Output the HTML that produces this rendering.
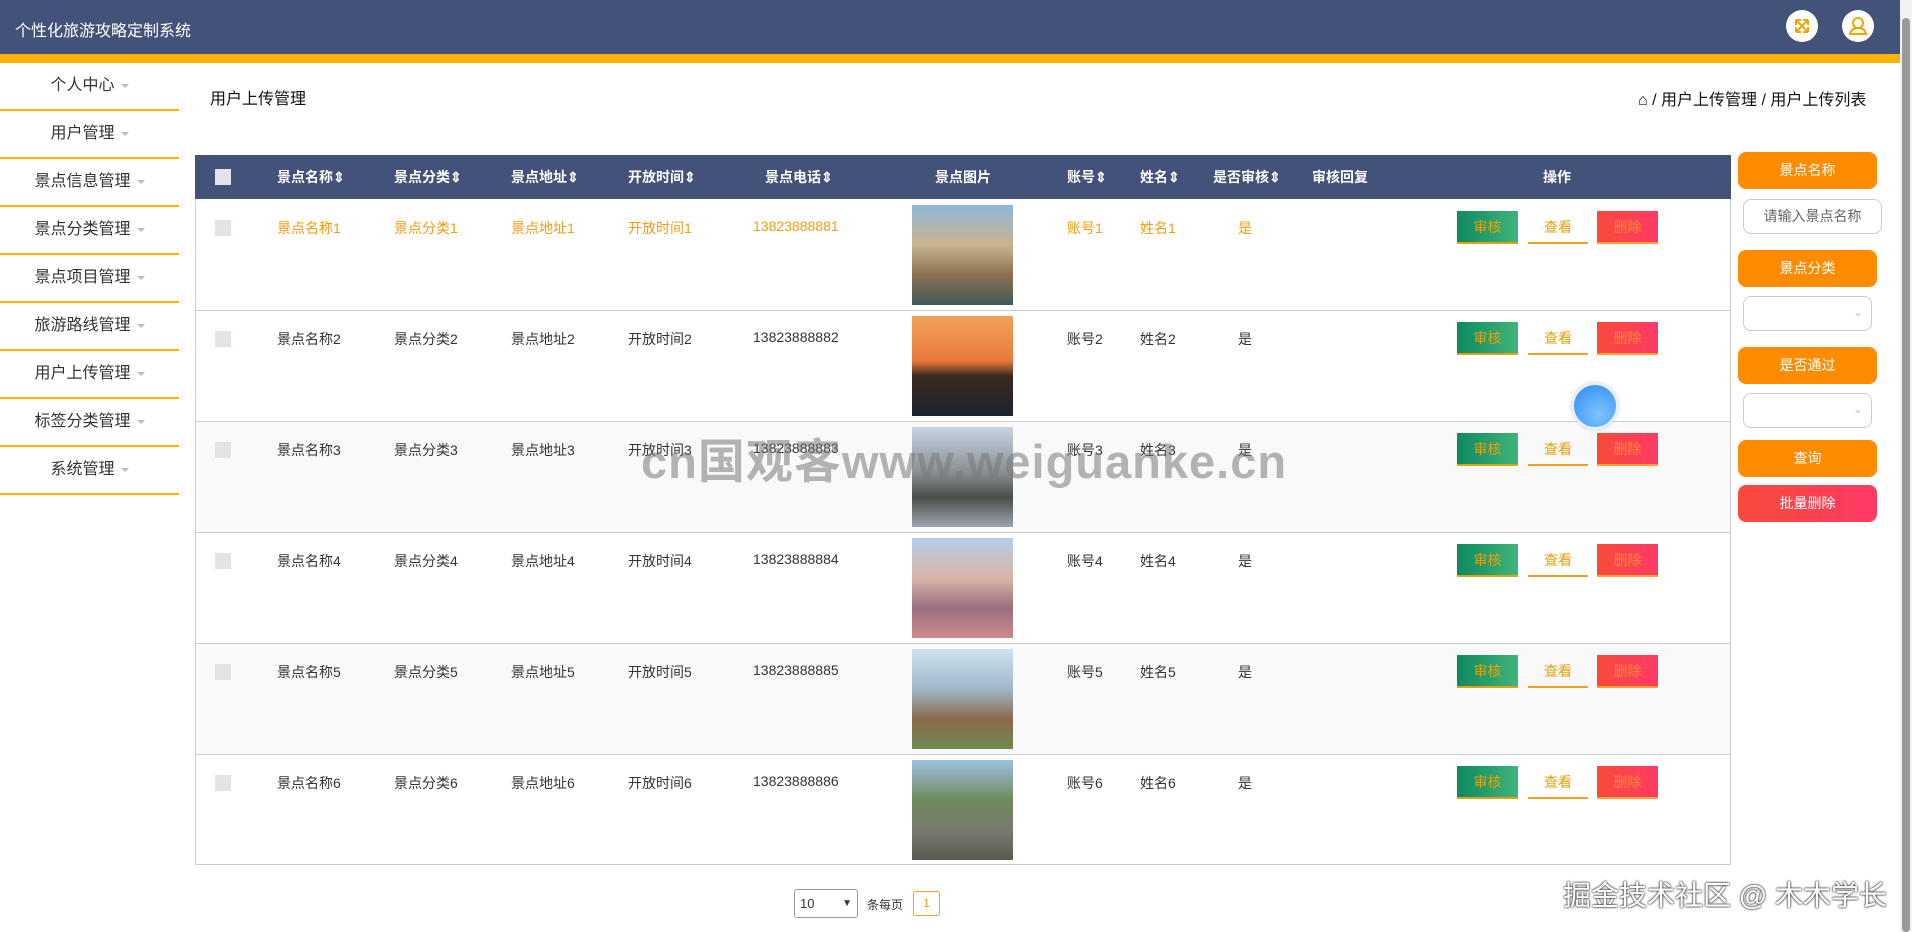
<!DOCTYPE html>
<html><head><meta charset="utf-8">
<style>
*{margin:0;padding:0;box-sizing:border-box}
body{width:1912px;height:932px;overflow:hidden;background:#fff;font-family:"Liberation Sans","Noto Sans CJK SC",sans-serif;position:relative;color:#333}
.a{position:absolute}
.hdr{left:0;top:0;width:1900px;height:54px;background:#435278}
.bar{left:0;top:54px;width:1900px;height:9px;background:#ffb300}
.ttl{left:15px;top:17px;color:#fff;font-size:16px}
.ic{width:32px;height:32px;border-radius:50%;background:#fff;top:10px}
.side{left:0;width:179px;height:48px;border-bottom:2px solid #ffb300;text-align:center;font-size:16px;line-height:46px;color:#333}
.side i{display:inline-block;width:0;height:0;border-left:4px solid transparent;border-right:4px solid transparent;border-top:4px solid #bbb;margin-left:6px;vertical-align:middle}
.th{top:155px;height:44px;left:195px;width:1536px;background:#435278}
.hc{top:155px;line-height:44px;color:#fff;font-size:14px;font-weight:bold}
.tbl{left:195px;top:155px;width:1536px;height:710px;border:1px solid #ccc}
.row{left:196px;width:1534px;height:111px;border-top:1px solid #ccc}
.cell{font-size:14px}
.cb{width:16px;height:16px;background:#e0e3e7}
.btn{height:33px;width:61px;font-size:14px;line-height:33px;text-align:center;color:#e5a00d}
.rb{left:1738px;width:139px;height:37px;border-radius:8px;background:#ff8c00;color:#fff;font-size:14px;text-align:center;line-height:37px}
.inp{border:1px solid #ccc;border-radius:8px;background:#fff}
</style></head><body>
<div class="a hdr"></div><div class="a bar"></div>
<div class="a ttl">个性化旅游攻略定制系统</div>
<div class="a ic" style="left:1786px"><svg width="32" height="32" viewBox="0 0 32 32" fill="none" stroke="#f0a500" stroke-width="2"><path d="M10 10l12 12M22 10L10 22M10 10h5M10 10v5M22 10h-5M22 10v5M10 22h5M10 22v-5M22 22h-5M22 22v-5"/></svg></div>
<div class="a ic" style="left:1842px"><svg width="32" height="32" viewBox="0 0 32 32" fill="none" stroke="#f0a500" stroke-width="2"><circle cx="16" cy="13" r="5"/><path d="M8 24c1-5 5-6 8-6s7 1 8 6z"/></svg></div>
<div class="a" style="left:1900px;top:0;width:12px;height:932px;background:#f1f1f1"></div>
<div class="a" style="left:1902px;top:18px;width:8px;height:914px;background:#999;border-radius:4px"></div>

<div class="a side" style="top:63px">个人中心<i></i></div>
<div class="a side" style="top:111px">用户管理<i></i></div>
<div class="a side" style="top:159px">景点信息管理<i></i></div>
<div class="a side" style="top:207px">景点分类管理<i></i></div>
<div class="a side" style="top:255px">景点项目管理<i></i></div>
<div class="a side" style="top:303px">旅游路线管理<i></i></div>
<div class="a side" style="top:351px">用户上传管理<i></i></div>
<div class="a side" style="top:399px">标签分类管理<i></i></div>
<div class="a side" style="top:447px">系统管理<i></i></div>

<div class="a" style="left:210px;top:85px;font-size:16px;color:#111">用户上传管理</div>
<div class="a" style="left:1638px;top:86px;font-size:16px;color:#111;white-space:nowrap">⌂ / 用户上传管理 / 用户上传列表</div>

<div class="a tbl"></div>
<div class="a th"></div>
<div class="a cb" style="left:215px;top:169px"></div>
<div class="a hc" style="left:277px">景点名称⇕</div>
<div class="a hc" style="left:394px">景点分类⇕</div>
<div class="a hc" style="left:511px">景点地址⇕</div>
<div class="a hc" style="left:628px">开放时间⇕</div>
<div class="a hc" style="left:765px">景点电话⇕</div>
<div class="a hc" style="left:935px">景点图片</div>
<div class="a hc" style="left:1067px">账号⇕</div>
<div class="a hc" style="left:1140px">姓名⇕</div>
<div class="a hc" style="left:1213px">是否审核⇕</div>
<div class="a hc" style="left:1312px">审核回复</div>
<div class="a hc" style="left:1543px">操作</div>

<div id="rows"></div>
<script>
var imgs=["linear-gradient(180deg,#8fb6d8 0%,#c9b48e 40%,#8a7050 70%,#3f5b5a 100%)","linear-gradient(180deg,#f2a25a 0%,#e8793a 45%,#3a2a20 60%,#1c2330 100%)","linear-gradient(180deg,#c8d4e4 0%,#8a8f93 45%,#4a4e48 70%,#9aa6b0 100%)","linear-gradient(180deg,#b6cde8 0%,#d6b5a8 40%,#9c6e7e 70%,#c98a8c 100%)","linear-gradient(180deg,#cfe3ef 0%,#9eb7c9 40%,#8a6a4a 70%,#6e8a4e 100%)","linear-gradient(180deg,#9cc0e0 0%,#6f8a5a 40%,#7a7a70 70%,#5a5a52 100%)"];
var h="";
for(var i=0;i<6;i++){var t=199+i*111,c=i==0?"#f39c12":"#333",bg=(i==2||i==4)?"#f9f9f9":"#fff",y=t+19,n=i+1;
h+='<div class="a row" style="top:'+t+'px;height:'+(i==5?110:111)+'px;background:'+bg+(i==0?';border-top:none':'')+'"></div>';
h+='<div class="a cb" style="left:215px;top:'+(t+21)+'px"></div>';
var cols=[[277,"景点名称"+n],[394,"景点分类"+n],[511,"景点地址"+n],[628,"开放时间"+n],[753,"1382388888"+n],[1067,"账号"+n],[1140,"姓名"+n],[1238,"是"]];
for(var k=0;k<cols.length;k++)h+='<div class="a cell" style="left:'+cols[k][0]+'px;top:'+y+'px;color:'+c+'">'+cols[k][1]+'</div>';
h+='<div class="a" style="left:912px;top:'+(t+6)+'px;width:101px;height:100px;background:'+imgs[i]+'"></div>';
h+='<div class="a btn" style="left:1457px;top:'+(t+12)+'px;background:linear-gradient(90deg,#0f8a5f,#3fb47a);border-bottom:2px solid #e5a00d">审核</div>';
h+='<div class="a btn" style="left:1528px;top:'+(t+12)+'px;border-bottom:2px solid #f0a020;width:60px">查看</div>';
h+='<div class="a btn" style="left:1597px;top:'+(t+12)+'px;background:linear-gradient(90deg,#f84a3a,#ff3a66);color:#ff8a30;border-bottom:2px solid #ffa030">删除</div>';}
document.getElementById("rows").innerHTML=h;
</script>
<div class="a" style="left:195px;top:864px;width:1536px;height:1px;background:#ccc"></div>

<div class="a rb" style="top:152px">景点名称</div>
<div class="a inp" style="left:1743px;top:199px;width:139px;height:35px;font-size:14px;color:#666;line-height:33px;text-align:center">请输入景点名称</div>
<div class="a rb" style="top:250px">景点分类</div>
<div class="a inp" style="left:1743px;top:296px;width:129px;height:35px"><span class="a" style="right:8px;top:8px;color:#bbb;font-size:12px">⌄</span></div>
<div class="a rb" style="top:347px">是否通过</div>
<div class="a inp" style="left:1743px;top:393px;width:129px;height:35px"><span class="a" style="right:8px;top:8px;color:#bbb;font-size:12px">⌄</span></div>
<div class="a rb" style="top:440px">查询</div>
<div class="a rb" style="top:485px;background:linear-gradient(90deg,#f84a3a,#ff3a66)">批量删除</div>

<div class="a" style="left:1572px;top:383px;width:46px;height:46px;border-radius:50%;background:radial-gradient(circle at 60% 70%,#7cc4ff,#2e8af0);border:2px solid #e8f2ff;box-shadow:0 0 4px #bcd"></div>
<div class="a" style="left:641px;top:423px;font-size:47px;font-weight:bold;color:rgba(120,120,120,0.55);letter-spacing:1px;white-space:nowrap">cn国观客www.weiguanke.cn</div>

<div class="a" style="left:794px;top:889px;width:64px;height:29px;border:1px solid #999;border-radius:3px;font-size:13px;line-height:27px;padding-left:5px">10<span style="position:absolute;right:5px;font-size:10px">▼</span></div>
<div class="a" style="left:867px;top:896px;font-size:12px">条每页</div>
<div class="a" style="left:913px;top:891px;width:27px;height:25px;border:1px solid #f0a020;border-radius:3px;color:#f0a020;font-size:12px;text-align:center;line-height:23px">1</div>
<div class="a" style="left:1563px;top:874px;font-size:28px;color:#fff;text-shadow:0 0 2px #333,0 0 2px #333;white-space:nowrap">掘金技术社区 @ 木木学长</div>
</body></html>
